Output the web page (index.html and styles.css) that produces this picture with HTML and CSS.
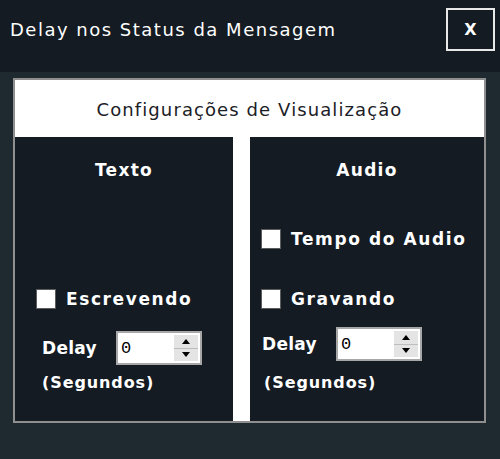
FILE: index.html
```html
<!DOCTYPE html>
<html lang="pt">
<head>
    <meta charset="UTF-8">
    <meta name="viewport" content="width=device-width, initial-scale=1.0">
    <title>Delay nos Status da Mensagem</title>
    <link rel="stylesheet" href="styles.css">
</head>
<body>
    <div class="titlebar">
        <span class="title">Delay nos Status da Mensagem</span>
        <button class="close-btn">X</button>
    </div>

    <div class="content">
        <div class="group">
            <div class="group-header">Configurações de Visualização</div>
            <div class="group-body">
                <div class="panel panel-left">
                    <div class="panel-title">Texto</div>
                    <label class="check-row row-escrevendo">
                        <span class="checkbox"></span>
                        <span>Escrevendo</span>
                    </label>
                    <div class="delay-row delay-left">
                        <span class="delay-label">Delay</span>
                        <div class="spinbox">
                            <span class="spin-value">0</span>
                            <div class="spin-buttons">
                                <span class="spin-up"></span>
                                <span class="spin-down"></span>
                            </div>
                        </div>
                    </div>
                    <div class="seconds seconds-left">(Segundos)</div>
                </div>

                <div class="panel panel-right">
                    <div class="panel-title">Audio</div>
                    <label class="check-row row-tempo">
                        <span class="checkbox"></span>
                        <span>Tempo do Audio</span>
                    </label>
                    <label class="check-row row-gravando">
                        <span class="checkbox"></span>
                        <span>Gravando</span>
                    </label>
                    <div class="delay-row delay-right">
                        <span class="delay-label">Delay</span>
                        <div class="spinbox">
                            <span class="spin-value">0</span>
                            <div class="spin-buttons">
                                <span class="spin-up"></span>
                                <span class="spin-down"></span>
                            </div>
                        </div>
                    </div>
                    <div class="seconds seconds-right">(Segundos)</div>
                </div>
            </div>
        </div>
    </div>
</body>
</html>
```

FILE: styles.css
```css
body {
    margin: 0;
    width: 500px;
    height: 459px;
    background-color: #1f2930;
    font-family: 'DejaVu Sans', Verdana, sans-serif;
    color: #ffffff;
    overflow: hidden;
}
.titlebar {
    height: 72px;
    background-color: #141b22;
    display: flex;
    align-items: center;
    justify-content: space-between;
    padding: 0 5px 0 10px;
}
.title {
    font-size: 18px;
    letter-spacing: 1.5px;
    margin-top: -13px;
}
.close-btn {
    width: 49px;
    height: 43px;
    margin-top: -14px;
    background: transparent;
    border: 2px solid #e8e8e8;
    color: #ffffff;
    font-family: 'DejaVu Sans', Verdana, sans-serif;
    font-weight: bold;
    font-size: 16px;
    padding: 0;
}
.content {
    padding: 6px 14px 0 13px;
}
.group {
    height: 341px;
    border: 2px solid #8f8f8f;
    background-color: #ffffff;
    display: flex;
    flex-direction: column;
}
.group-header {
    height: 57px;
    display: flex;
    align-items: center;
    justify-content: center;
    color: #1b2026;
    font-size: 18px;
    letter-spacing: 1.1px;
    padding-top: 1px;
    box-sizing: border-box;
}
.group-body {
    flex: 1;
    display: flex;
    gap: 17px;
}
.panel {
    background-color: #141b22;
    display: flex;
    flex-direction: column;
    padding-top: 23px;
    font-weight: bold;
    font-size: 17px;
    letter-spacing: 1.3px;
}
.panel-left {
    width: 218px;
    padding-left: 21px;
    box-sizing: border-box;
}
.panel-right {
    flex: 1;
    padding-left: 11px;
}
.panel-title {
    height: 20px;
    line-height: 20px;
    text-align: center;
    margin-left: -21px;
}
.panel-right .panel-title {
    margin-left: -11px;
}
.check-row {
    height: 20px;
    display: flex;
    align-items: center;
    gap: 10px;
    letter-spacing: 1.6px;
}
.checkbox {
    width: 18px;
    height: 18px;
    background-color: #ffffff;
    border: 1px solid #5c5c5c;
    flex-shrink: 0;
}
.row-tempo {
    margin-top: 49px;
}
.row-gravando {
    margin-top: 40px;
}
.row-escrevendo {
    margin-top: 109px;
}
.delay-row {
    display: flex;
    align-items: center;
    height: 34px;
    letter-spacing: 0.3px;
}
.delay-left {
    margin-top: 22px;
    padding-left: 6px;
}
.delay-right {
    margin-top: 18px;
    padding-left: 1px;
}
.delay-label {
    width: 74px;
}
.spinbox {
    width: 86px;
    height: 34px;
    box-sizing: border-box;
    border: 2px solid #a7a7a7;
    background-color: #ffffff;
    display: flex;
    justify-content: space-between;
    align-items: center;
    padding: 1px 2px 1px 3px;
}
.spin-value {
    color: #000000;
    font-family: 'Liberation Mono', monospace;
    font-weight: normal;
    font-size: 17px;
}
.spin-buttons {
    width: 24px;
    height: 26px;
    display: flex;
    flex-direction: column;
    gap: 1px;
    background-color: #bdbdbd;
}
.spin-up,
.spin-down {
    flex: 1;
    background-color: #e4e4e4;
    display: flex;
    align-items: center;
    justify-content: center;
}
.spin-up::before {
    content: '';
    border-left: 4px solid transparent;
    border-right: 4px solid transparent;
    border-bottom: 5px solid #000000;
}
.spin-down::before {
    content: '';
    border-left: 4px solid transparent;
    border-right: 4px solid transparent;
    border-top: 5px solid #000000;
}
.seconds {
    height: 20px;
    line-height: 20px;
    font-size: 16px;
    letter-spacing: 0.9px;
}
.seconds-left {
    margin-top: 8px;
    padding-left: 6px;
}
.seconds-right {
    margin-top: 12px;
    padding-left: 3px;
}
```
